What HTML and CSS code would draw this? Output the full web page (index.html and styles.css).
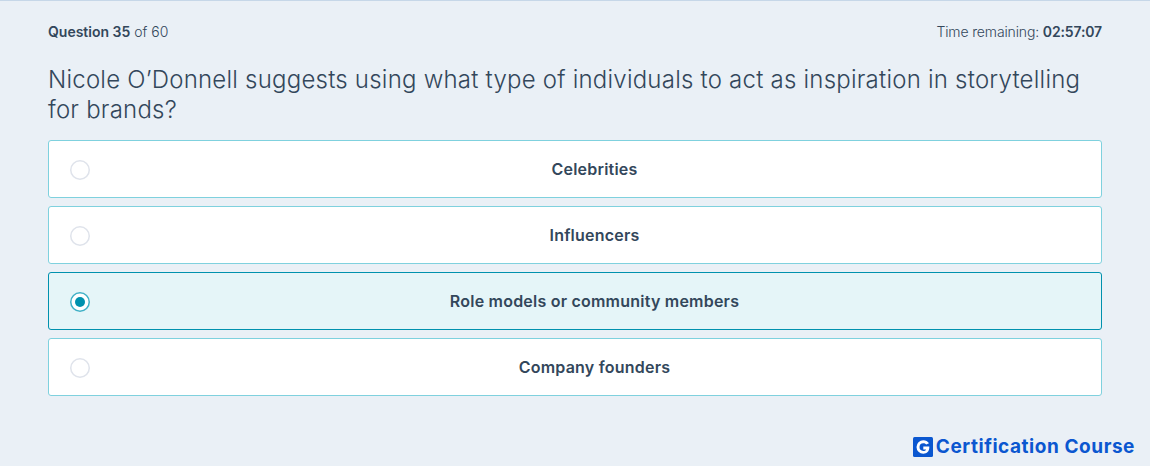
FILE: index.html
```html
<!DOCTYPE html>
<html lang="en">
<head>
    <meta charset="UTF-8">
    <meta name="viewport" content="width=device-width, initial-scale=1.0">
    <title>Exam question</title>
    <link rel="stylesheet" href="styles.css">
</head>
<body>
    <main class="quiz">
        <div class="quiz-top">
            <div><b>Question 35</b> of 60</div>
            <div class="timer">Time remaining: <b>02:57:07</b></div>
        </div>
        <h1 class="question">Nicole O’Donnell suggests using what type of individuals to act as inspiration in storytelling for brands?</h1>
        <div class="answers">
            <div class="answer"><span class="radio"></span><span class="answer-text">Celebrities</span></div>
            <div class="answer"><span class="radio"></span><span class="answer-text">Influencers</span></div>
            <div class="answer selected"><span class="radio"></span><span class="answer-text">Role models or community members</span></div>
            <div class="answer"><span class="radio"></span><span class="answer-text">Company founders</span></div>
        </div>
    </main>
    <div class="brand">
        <svg class="brand-icon" viewBox="0 0 20 20" width="20" height="20">
            <rect width="20" height="20" rx="1.5" fill="#0b57d0"/>
            <path d="M16 6.200A6.800 6.800 0 0 0 10.300 3.200a6.800 6.800 0 1 0 0 13.600c3.600 0 6-2.400 6-6.200v-1h-6v2.800h2.800c-.5 1-1.400 1.500-2.800 1.500a3.800 3.800 0 1 1 0-7.600c1.200 0 2.200.5 2.900 1.300z" fill="#fff"/>
        </svg>
        <span>Certification Course</span>
    </div>
</body>
</html>
```

FILE: styles.css
```css
* {
    box-sizing: border-box;
}
html, body {
    height: 100%;
}
body {
    margin: 0;
    background: #eaf0f6;
    border-top: 1px solid #c6d7e8;
    color: #33475b;
    font-family: "Inter", "Open Sans", sans-serif;
    display: flex;
    flex-direction: column;
    overflow: hidden;
}
.quiz {
    padding: 23px 48px 0;
}
.quiz-top {
    display: flex;
    justify-content: space-between;
    font-size: 14px;
    line-height: 16px;
    font-weight: 300;
}
.quiz-top b {
    font-weight: 600;
}
.timer {
    letter-spacing: -0.01em;
}
.question {
    margin: 25px 0 15px;
    font-size: 24px;
    line-height: 30px;
    font-weight: 300;
    letter-spacing: 0.22px;
}
.answers {
    display: flex;
    flex-direction: column;
    gap: 8px;
}
.answer {
    height: 58px;
    display: flex;
    align-items: center;
    padding-left: 21px;
    background: #fff;
    border: 1px solid #7fd1de;
    border-radius: 3px;
}
.answer.selected {
    background: #e5f5f8;
    border-color: #0091ae;
}
.radio {
    width: 20px;
    height: 20px;
    flex: none;
    margin-top: 2px;
    background: #fff;
    box-shadow: inset 0 0 0 1.5px #dfe3eb;
    border-radius: 50%;
}
.selected .radio {
    box-shadow: inset 0 0 0 1.5px #3fb0c6;
    position: relative;
}
.selected .radio::after {
    content: "";
    position: absolute;
    inset: 5px;
    border-radius: 50%;
    background: #0091ae;
}
.answer-text {
    flex: 1;
    padding-right: 2px;
    text-align: center;
    font-size: 16px;
    font-weight: 600;
    letter-spacing: 0.22px;
}
.brand {
    margin-top: auto;
    padding: 0 15px 9px 0;
    display: flex;
    justify-content: flex-end;
    align-items: center;
    gap: 3px;
    color: #0b57d0;
    font-family: "Inter", sans-serif;
    font-size: 19px;
    line-height: 20px;
    font-weight: 700;
    letter-spacing: 0.55px;
}
```
